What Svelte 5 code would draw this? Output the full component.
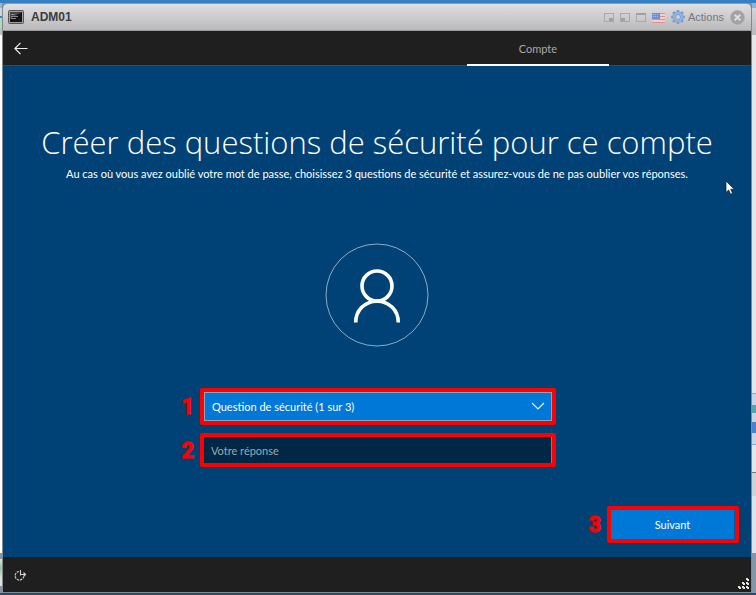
<script lang="ts">
	let question = $state('');
	let answer = $state('');
</script>

<div class="desktop">
	<div class="behind left"></div>
	<div class="window">
		<header class="titlebar">
			<svg class="console" width="16" height="14" viewBox="0 0 16 14">
				<rect x="0.5" y="0.5" width="15" height="13" rx="1" fill="#a0a0a0" stroke="#555" />
				<rect x="2" y="2" width="12" height="10" fill="#151515" />
				<path d="M2 2h12L2 9z" fill="#444" />
				<path d="M3 4.5h4M3 6.5h7M3 8.5h5" stroke="#888" />
			</svg>
			<span class="name">ADM01</span>
			<div class="tools">
				<button aria-label="Réduire en bas à droite">
					<svg width="10" height="9" viewBox="0 0 10 9">
						<rect x="0.5" y="0.5" width="9" height="8" fill="none" stroke="#a9a9ac" />
						<path d="M5 5h4v3H5z" fill="#a0a0a3" />
					</svg>
				</button>
				<button aria-label="Réduire en bas à gauche">
					<svg width="10" height="9" viewBox="0 0 10 9">
						<rect x="0.5" y="0.5" width="9" height="8" fill="none" stroke="#a9a9ac" />
						<path d="M1 5h4v3H1z" fill="#a0a0a3" />
					</svg>
				</button>
				<button aria-label="Agrandir">
					<svg width="10" height="9" viewBox="0 0 10 9">
						<rect x="0.5" y="0.5" width="9" height="8" fill="none" stroke="#a9a9ac" />
						<path d="M0 0h10v2H0z" fill="#a0a0a3" />
					</svg>
				</button>
				<button aria-label="Clavier">
					<svg width="13" height="11" viewBox="0 0 13 11">
						<rect y="1" width="13" height="10" fill="#ecd2d0" />
						<path d="M0 1.5h13M0 4.5h13M0 7.5h13M0 10.5h13" stroke="#df8f88" />
						<rect y="1" width="8" height="6" fill="#6f8fd0" />
						<path d="M1 2.5h6M1 4.5h6" stroke="#a9bce4" stroke-dasharray="1 1" />
					</svg>
				</button>
				<button class="actions">
					<svg width="14" height="14" viewBox="0 0 14 14">
						<path
							d="M7 0v14M0 7h14M2 2l10 10M12 2L2 12"
							stroke="#7d9ecf"
							stroke-width="2.6"
						/>
						<circle cx="7" cy="7" r="5.3" fill="#93b3e2" stroke="#7d9ecf" stroke-width="0.8" />
						<circle cx="7" cy="7" r="2.5" fill="#cfd0d4" stroke="#7598cb" stroke-width="0.8" />
					</svg>
					Actions
				</button>
				<button class="close" aria-label="Fermer">
					<svg width="15" height="15" viewBox="0 0 15 15">
						<circle cx="7.5" cy="7.5" r="7.2" fill="#a2a2a4" />
						<path d="M4.7 4.7l5.6 5.6M10.3 4.7l-5.6 5.6" stroke="#dedee0" stroke-width="2" />
					</svg>
				</button>
			</div>
		</header>

		<nav class="tabs">
			<button class="back" aria-label="Retour">
				<svg width="14" height="13" viewBox="0 0 14 13">
					<path d="M6.5 0.8L0.9 6.5l5.6 5.7M1 6.5h12.5" fill="none" stroke="#eee" stroke-width="1.2" />
				</svg>
			</button>
			<a class="tab" href="#compte">Compte</a>
		</nav>

		<main>
			<h1>Créer des questions de sécurité pour ce compte</h1>
			<p>
				Au cas où vous avez oublié votre mot de passe, choisissez 3 questions de sécurité et
				assurez-vous de ne pas oublier vos réponses.
			</p>
			<svg class="avatar" width="104" height="104" viewBox="0 0 104 104">
				<circle cx="52" cy="52" r="51" fill="none" stroke="#9db8cc" stroke-width="0.9" />
				<g fill="none" stroke="#fff" stroke-width="3.6">
					<circle cx="52" cy="43" r="15" />
					<path d="M30.7 79.5c0-12 9-21.3 21.3-21.3s21.3 9.3 21.3 21.3" />
				</g>
			</svg>

			<form>
				<div class="mark">
					<span class="step">1</span>
					<select aria-label="Question de sécurité" bind:value={question}>
						<option value="">Question de sécurité (1 sur 3)</option>
					</select>
					<svg class="chevron" width="14" height="8" viewBox="0 0 14 8">
						<path d="M1 1l6 6 6-6" fill="none" stroke="#e4f0fb" stroke-width="1.2" />
					</svg>
				</div>
				<div class="mark">
					<span class="step">2</span>
					<input type="text" placeholder="Votre réponse" aria-label="Votre réponse" bind:value={answer} />
				</div>
			</form>

			<div class="mark next">
				<span class="step">3</span>
				<button>Suivant</button>
			</div>

			<svg class="cursor" width="10" height="16" viewBox="0 0 10 16">
				<path d="M1 1v11.5l2.7-2.5 1.8 4.2 2-.9-1.8-4h3.6z" fill="#fff" stroke="#0a1a2a" stroke-width="0.7" />
			</svg>
		</main>

		<footer>
			<button aria-label="Options d'ergonomie">
				<svg width="14" height="12" viewBox="0 0 14 12">
					<path d="M5 2.5a4.3 4.3 0 1 0 4.7 5" fill="none" stroke="#c8c8c8" stroke-width="1.2" stroke-dasharray="2.5 0.8" />
					<path d="M6.5 1v5.5M6 5.5h5M9.5 3.5l2 2-2 2" fill="none" stroke="#d8ccd8" stroke-width="1.1" />
				</svg>
			</button>
			<svg class="grip" width="12" height="12" viewBox="0 0 12 12" fill="#e6e3d8">
				<path d="M8 0h2v2H8zM4 4h2v2H4zM8 4h2v2H8zM0 8h2v2H0zM4 8h2v2H4zM8 8h2v2H8z" />
				<path d="M9 1h2v2H9zM5 5h2v2H5zM9 5h2v2H9zM1 9h2v2H1zM5 9h2v2H5zM9 9h2v2H9z" />
			</svg>
		</footer>
	</div>
	<div class="behind right"></div>
</div>

<style>
	:global(body) {
		margin: 0;
	}
	.desktop {
		display: grid;
		grid-template-columns: 2px 1fr 4px;
		box-sizing: border-box;
		min-height: 100vh;
		padding: 3px 0 2px;
		background: linear-gradient(#3580c2 3px, #8293a6 3px, #8293a6 calc(100% - 2px), #284a78 calc(100% - 2px));
		font-family: 'Segoe UI', Lato, 'Noto Sans', sans-serif;
		font-size: 11px;
		color: #fff;
	}
	.behind.left {
		background: linear-gradient(
			#8fb9de 5px, #d3d4d8 5px, #d3d4d8 13px, #3f87c8 13px, #3f87c8 15px,
			#a5dfbc 15px, #a5dfbc 25px, #c0c0c3 25px, #c0c0c3 32px, #fff 32px,
			#fff 550px, #8495a5 550px, #8495a5 556px, #e0e4e4 556px, #8fc79b 565px,
			#d9e3dc 575px, #d9e3dc 583px, #8495a5 583px
		);
	}
	.behind.right {
		background: linear-gradient(
			#8fb3d6 5px, #d3d4d8 5px, #b8b8bc 32px, #e6e6e8 32px, #e6e6e8 390px,
			#86a9da 390px, #86a9da 391px, #c8d5e3 391px, #c8d5e3 402px, #57a3a8 402px,
			#57a3a8 410px, #c8d5e3 410px, #c8d5e3 419px, #527fc9 419px, #527fc9 430px,
			#c8d5e3 430px, #c8d5e3 441px, #86a9da 441px, #86a9da 442px, #e6e6e8 442px,
			#e6e6e8 469px, #777 469px, #777 470px, #d0d1d4 470px, #d0d1d4 493px,
			#dde3e9 493px, #dde3e9 550px, #8495a5 550px
		);
	}
	.window {
		display: flex;
		flex-direction: column;
		min-width: 0;
		border: 1px solid #85898d;
		border-top-color: #8d9aa8;
		border-radius: 5px 5px 0 0;
		overflow: hidden;
		background: #1f1f1f;
	}
	button,
	input,
	select {
		font: inherit;
		color: inherit;
		padding: 0;
		border: 0;
		border-radius: 0;
		background: none;
	}
	svg {
		display: block;
	}
	.titlebar {
		display: flex;
		align-items: center;
		box-sizing: border-box;
		height: 27px;
		padding: 0 6px 0 5px;
		border-bottom: 1px solid #98989b;
		background: linear-gradient(#dfdfe2, #bababd);
		font-family: Arial, 'Liberation Sans', sans-serif;
	}
	.name {
		margin-left: 7px;
		color: #3c3c3e;
		font-size: 12px;
		font-weight: bold;
	}
	.tools {
		display: flex;
		align-items: center;
		gap: 6px;
		margin-left: auto;
	}
	.actions {
		display: flex;
		align-items: center;
		gap: 3px;
		color: #77777a;
	}
	.tabs {
		display: flex;
		align-items: stretch;
		box-sizing: border-box;
		height: 35px;
		border-bottom: 1px solid #454545;
	}
	.back {
		padding: 0 11px;
	}
	.tab {
		box-sizing: border-box;
		width: 19%;
		height: 35px;
		margin: 0 19% 0 auto;
		border-bottom: 2px solid #fff;
		color: #a8a8a8;
		line-height: 36px;
		text-align: center;
		text-decoration: none;
	}
	main {
		position: relative;
		display: flex;
		flex: 1;
		flex-direction: column;
		align-items: center;
		padding: 52px 12px 14px;
		background: #004275;
	}
	h1 {
		margin: 0;
		font-family: 'Segoe UI', 'Open Sans', 'Noto Sans', sans-serif;
		font-size: 31px;
		font-weight: 300;
		line-height: 48px;
		white-space: nowrap;
	}
	p {
		margin: 0;
		line-height: 16px;
		white-space: nowrap;
	}
	.avatar {
		margin-top: 61px;
	}
	form {
		display: grid;
		gap: 8px;
		width: 356px;
		max-width: 100%;
		margin: 41px 0 0 2px;
	}
	.mark {
		position: relative;
		border: 4px solid #f00;
		border-radius: 2px;
	}
	.step {
		position: absolute;
		right: 100%;
		top: 0;
		bottom: 0;
		display: flex;
		align-items: center;
		margin-right: 10px;
		color: #f00;
		font-family: Impact, Roboto, sans-serif;
		font-size: 22px;
		font-weight: 700;
		-webkit-text-stroke: 1px #f00;
	}
	select,
	input {
		display: block;
		box-sizing: border-box;
		width: 100%;
	}
	select {
		appearance: none;
		height: 29px;
		padding: 0 7px;
		border: 1px solid #8aa5bd;
		background: #0078d7;
	}
	.chevron {
		position: absolute;
		right: 7px;
		top: 10px;
		pointer-events: none;
	}
	input {
		height: 26px;
		padding: 0 7px;
		border-right: 1px solid #6f8496;
		background: #002846;
	}
	input::placeholder {
		color: #9aa9b5;
		opacity: 1;
	}
	.next {
		align-self: flex-end;
		width: 124px;
		margin-top: auto;
	}
	.next button {
		display: block;
		width: 100%;
		height: 29px;
		border-right: 1px solid #00559c;
		background: #0078d7;
	}
	.cursor {
		position: absolute;
		top: 114px;
		right: 16px;
	}
	footer {
		display: flex;
		align-items: center;
		justify-content: space-between;
		height: 35px;
		padding: 0 1px 0 11px;
	}
	.grip {
		align-self: flex-end;
		margin-bottom: 2px;
	}
</style>
